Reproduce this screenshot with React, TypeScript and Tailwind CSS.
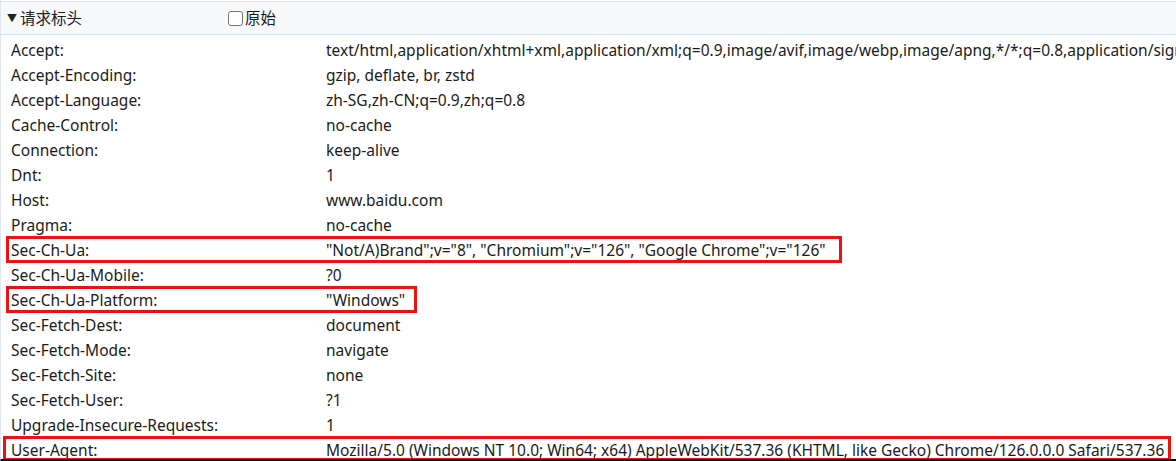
import React from "react";

const rows: [string, string][] = [
  ["Accept:", "text/html,application/xhtml+xml,application/xml;q=0.9,image/avif,image/webp,image/apng,*/*;q=0.8,application/signed-exchange;v=b3;q=0.7"],
  ["Accept-Encoding:", "gzip, deflate, br, zstd"],
  ["Accept-Language:", "zh-SG,zh-CN;q=0.9,zh;q=0.8"],
  ["Cache-Control:", "no-cache"],
  ["Connection:", "keep-alive"],
  ["Dnt:", "1"],
  ["Host:", "www.baidu.com"],
  ["Pragma:", "no-cache"],
  ["Sec-Ch-Ua:", "\"Not/A)Brand\";v=\"8\", \"Chromium\";v=\"126\", \"Google Chrome\";v=\"126\""],
  ["Sec-Ch-Ua-Mobile:", "?0"],
  ["Sec-Ch-Ua-Platform:", "\"Windows\""],
  ["Sec-Fetch-Dest:", "document"],
  ["Sec-Fetch-Mode:", "navigate"],
  ["Sec-Fetch-Site:", "none"],
  ["Sec-Fetch-User:", "?1"],
  ["Upgrade-Insecure-Requests:", "1"],
  ["User-Agent:", "Mozilla/5.0 (Windows NT 10.0; Win64; x64) AppleWebKit/537.36 (KHTML, like Gecko) Chrome/126.0.0.0 Safari/537.36"],
];

export default function App() {
  return (
    <div
      className="relative h-[461px] w-[1176px] overflow-hidden bg-white border-l border-[#dfe7f4] border-b-2 border-b-black text-[15.5px] text-[#1b1b1b]"
      style={{ fontFamily: '"Noto Sans", "Noto Sans CJK SC", sans-serif' }}
    >
      <div className="mt-px flex h-[34px] items-center border-y border-[#d6e3f8] bg-[#f8f9fb]">
        <span className="ml-[6px] text-[10px] leading-none text-[#222]">▼</span>
        <span className="ml-[3px] w-[208px] text-[15.5px]" style={{ fontFamily: '"Noto Sans CJK SC", sans-serif' }}>
          请求标头
        </span>
        <span className="box-border h-[15px] w-[15px] rounded-[3px] border border-[#767676] bg-white" />
        <span className="ml-[2px] text-[15.5px]" style={{ fontFamily: '"Noto Sans CJK SC", sans-serif' }}>
          原始
        </span>
      </div>
      <div className="pt-[3px]">
        {rows.map(([k, v], i) => (
          <div key={k} className="relative flex h-[25px] items-center whitespace-nowrap pl-[10px]">
            <span className="w-[315px] shrink-0">{k}</span>
            <span>{v}</span>
            {i === 8 && (
              <div className="absolute left-[5px] top-[-2px] h-[27px] w-[836px] border-[3px] border-[#ee1111]" />
            )}
            {i === 10 && (
              <div className="absolute left-[5px] top-[-2px] h-[27px] w-[411px] border-[3px] border-[#ee1111]" />
            )}
            {i === 16 && (
              <div className="absolute left-[2px] top-[-2px] h-[25px] w-[1168px] border-[3px] border-[#ee1111]" />
            )}
          </div>
        ))}
      </div>
    </div>
  );
}
